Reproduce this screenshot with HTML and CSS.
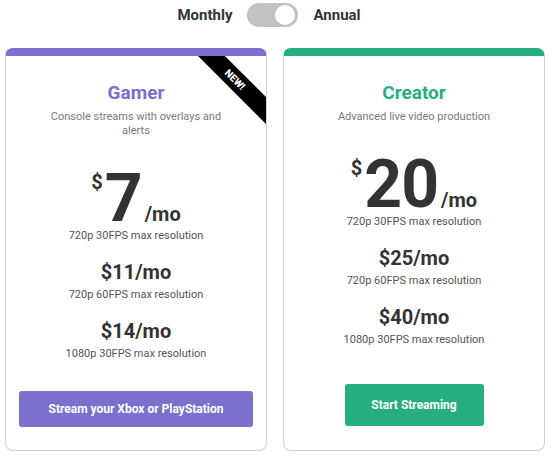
FILE: index.html
```html
<!DOCTYPE html>
<html>
<head>
<meta charset="utf-8">
<link rel="stylesheet" href="styles.css">
</head>
<body>
<div class="page">
  <div class="toggle-row">
    <span class="toggle-label">Monthly</span>
    <span class="switch"><span class="knob"></span></span>
    <span class="toggle-label">Annual</span>
  </div>
  <div class="plans">
    <div class="card card-gamer">
      <div class="ribbon">NEW!</div>
      <h2 class="title">Gamer</h2>
      <p class="desc">Console streams with overlays and alerts</p>
      <div class="big-price"><span class="cur">$</span><span class="amt">7</span><span class="per">/mo</span></div>
      <div class="sub">720p 30FPS max resolution</div>
      <div class="tier">$11/mo</div>
      <div class="sub">720p 60FPS max resolution</div>
      <div class="tier">$14/mo</div>
      <div class="sub">1080p 30FPS max resolution</div>
      <div class="btn-wrap"><a class="btn btn-gamer">Stream your Xbox or PlayStation</a></div>
    </div>
    <div class="card card-creator">
      <h2 class="title">Creator</h2>
      <p class="desc">Advanced live video production</p>
      <div class="big-price"><span class="cur">$</span><span class="amt">20</span><span class="per">/mo</span></div>
      <div class="sub">720p 30FPS max resolution</div>
      <div class="tier">$25/mo</div>
      <div class="sub">720p 60FPS max resolution</div>
      <div class="tier">$40/mo</div>
      <div class="sub">1080p 30FPS max resolution</div>
      <div class="btn-wrap"><a class="btn btn-creator">Start Streaming</a></div>
    </div>
  </div>
</div>
</body>
</html>
```
FILE: styles.css
```css
* { box-sizing: border-box; }
html, body { margin: 0; padding: 0; background: #fff; }
body { font-family: Roboto, "Liberation Sans", sans-serif; color: #333; }
.page { padding: 3px 8px 0 5px; width: 553px; }
.toggle-row {
  display: flex; align-items: center; justify-content: center;
  gap: 15px; padding-right: 12px; height: 24px;
}
.toggle-label { font-size: 15px; font-weight: 700; color: #333; }
.switch {
  position: relative; width: 51px; height: 24px; border-radius: 12px;
  background: #c2c2c2; display: inline-block;
}
.knob {
  position: absolute; top: 2px; right: 3px; width: 20px; height: 20px;
  border-radius: 50%; background: #fff;
}
.plans {
  display: grid; grid-template-columns: 262px 262px; column-gap: 16px;
  margin-top: 21px;
}
.card {
  position: relative; overflow: hidden;
  border: 1px solid #cfcfcf; border-top: 8px solid; border-radius: 8px;
  height: 403px; text-align: center; padding: 0 13px;
}
.card-gamer { border-top-color: #7a70cd; }
.card-creator { border-top-color: #27ae80; }
.ribbon {
  position: absolute; top: 14px; right: -29px; width: 120px; height: 19px;
  line-height: 19px; background: #000; color: #fff; font-size: 10px;
  font-weight: 900; transform: rotate(45deg); text-align: center;
}
.title { margin: 25px 0 0; font-size: 19px; line-height: 24px; font-weight: 700; }
.card-gamer .title { color: #7a70cd; }
.card-creator .title { color: #27ae80; }
.desc { margin: 5px 30px 0; font-size: 11px; line-height: 14px; color: #7a7a7a; }
.big-price { margin-top: 31px; line-height: 60px; height: 60px; font-weight: 700; color: #333; }
.cur { font-size: 20px; vertical-align: top; line-height: 20px; display: inline-block; padding-top: 3px; margin-right: 2px; }
.amt { display: inline-block; line-height: 60px; height: 60px; font-size: 66px; font-weight: 700; letter-spacing: -1px; }
.per { display: inline-block; line-height: 20px; font-size: 20px; margin-left: 3px; }
.sub { font-size: 11px; line-height: 14px; color: #555; }
.tier { margin-top: 17px; margin-bottom: 4px; font-size: 20px; line-height: 24px; font-weight: 700; color: #333; }
.btn-wrap { display: flex; justify-content: center; }
.btn {
  display: flex; align-items: center; justify-content: center;
  color: #fff; font-size: 12px; font-weight: 700; border-radius: 3px;
}
.btn-gamer { background: #7a70cd; width: 235px; height: 36px; margin-top: 30px; }
.btn-creator { background: #27ae80; width: 139px; height: 42px; margin-top: 37px; }
```
